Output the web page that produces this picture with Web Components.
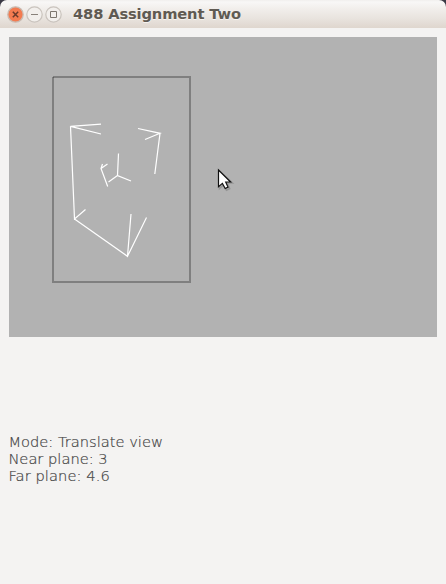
<!DOCTYPE html>
<html lang="en"><head><meta charset="utf-8"><title>488 Assignment Two</title>
<style>html,body{margin:0;height:100%;overflow:hidden;background:#f4f3f2}</style></head>
<body>
<app-window><title-bar slot="title">488 Assignment Two</title-bar>
<wire-view></wire-view>
<status-lines><div>Mode: Translate view</div><div>Near plane: 3</div><div class="far">Far plane: 4.6</div></status-lines></app-window>
<script>
const define=(name,html)=>customElements.define(name,class extends HTMLElement{
 constructor(){super();this.attachShadow({mode:"open"}).innerHTML=html;}
});
define("app-window",`<style>:host{display:flex;flex-direction:column;width:446px;height:584px;background:#f4f3f2}
main{display:flex;flex-direction:column;padding:9px 9px 0;gap:96px}</style><slot name="title"></slot><main><slot></slot></main>`);
define("window-button",`<style>:host{display:block;width:17px;height:17px}svg{display:block}</style><slot></slot>`);
define("title-bar",`<style>:host{display:block;height:28px;background:#3a3945}
.bar{box-sizing:border-box;height:28px;display:flex;align-items:center;padding-left:7px;border-radius:7px 7px 0 0;background:linear-gradient(#f1efed 0,#f8f7f6 2px,#f1eeeb 9px,#e9e4df 18px,#dfd6ce 28px)}
.buttons{display:flex;gap:2px;padding-top:1px}svg{display:block}
.title{margin-left:11px;font:bold 14.67px/28px "DejaVu Sans",sans-serif;letter-spacing:-.13px;color:#5f5a52;white-space:nowrap;text-shadow:0 1px #f5f2ef}</style>
<div class="bar"><div class="buttons">
<window-button><svg width="17" height="17"><circle cx="8.5" cy="8.5" r="7.7" fill="#f37b50" stroke="#c9bcb3" stroke-width="1.3"/><path d="M5.8 5.8l5.4 5.4m0-5.4l-5.4 5.4" stroke="#68392a" stroke-width="1.5"/></svg></window-button>
<window-button><svg width="17" height="17"><circle cx="8.5" cy="8.5" r="7.7" fill="#f2efec" stroke="#c9c3bd" stroke-width="1.2"/><path d="M5 8.5h7" stroke="#88817a"/></svg></window-button>
<window-button><svg width="17" height="17"><circle cx="8.5" cy="8.5" r="7.7" fill="#f2efec" stroke="#c9c3bd" stroke-width="1.2"/><path d="M5.5 5.5h6v6h-6z" fill="none" stroke="#7d766f"/></svg></window-button>
</div><div class="title"><slot></slot></div></div>`);
define("wire-view",`<style>:host{display:block;width:428px;height:300px;background:#b2b2b2}svg{display:block}</style>
<svg width="428" height="300" viewBox="9 37 428 300" fill="none">
<rect x="53" y="77" width="137" height="205" stroke="#7f7f7f" stroke-width="2"/>
<path d="M52 76h1v1h-1z" fill="#b2b2b2"/><path d="M53 77h1v1h-1z" fill="#5c5c5c"/>
<g stroke="#fff" stroke-width="1.2">
<path d="M101 124.2L70.5 126.3L101 134M70.5 126.3L74.5 219L85.5 209.5M74.5 219L127.5 256.3L131 214M127.5 256.3L146.5 217.5"/>
<path d="M138 128.5L160 133.3L145 139.5M160 133.3L154.8 174"/>
<path d="M118.5 153.5L117.5 175.5L131 181M117.5 175.5L108.5 182"/>
<path d="M107.5 164L101 168.5L107.7 186.5M101 168.5L102.5 164"/></g>
<path d="M219.5 171v17.5l4-3.7 3 5.4 3.2-1.6-2.7-5.6h5.4z" stroke="#777" stroke-opacity=".5" stroke-width="1.5"/>
<path d="M218.5 170v16.8l3.9-3.4 2.8 5.1 2.8-1.4-2.3-5.1h4.9z" fill="#fff" stroke="#111" stroke-width="1.2"/></svg>`);
define("status-lines",`<style>:host{display:block;margin-left:-.6px;font:200 14.67px/17px "DejaVu Sans Light","DejaVu Sans",sans-serif;color:#444;-webkit-text-stroke:.2px #444;white-space:nowrap}::slotted(.far){letter-spacing:.08px}</style><slot></slot>`);
</script></body></html>
